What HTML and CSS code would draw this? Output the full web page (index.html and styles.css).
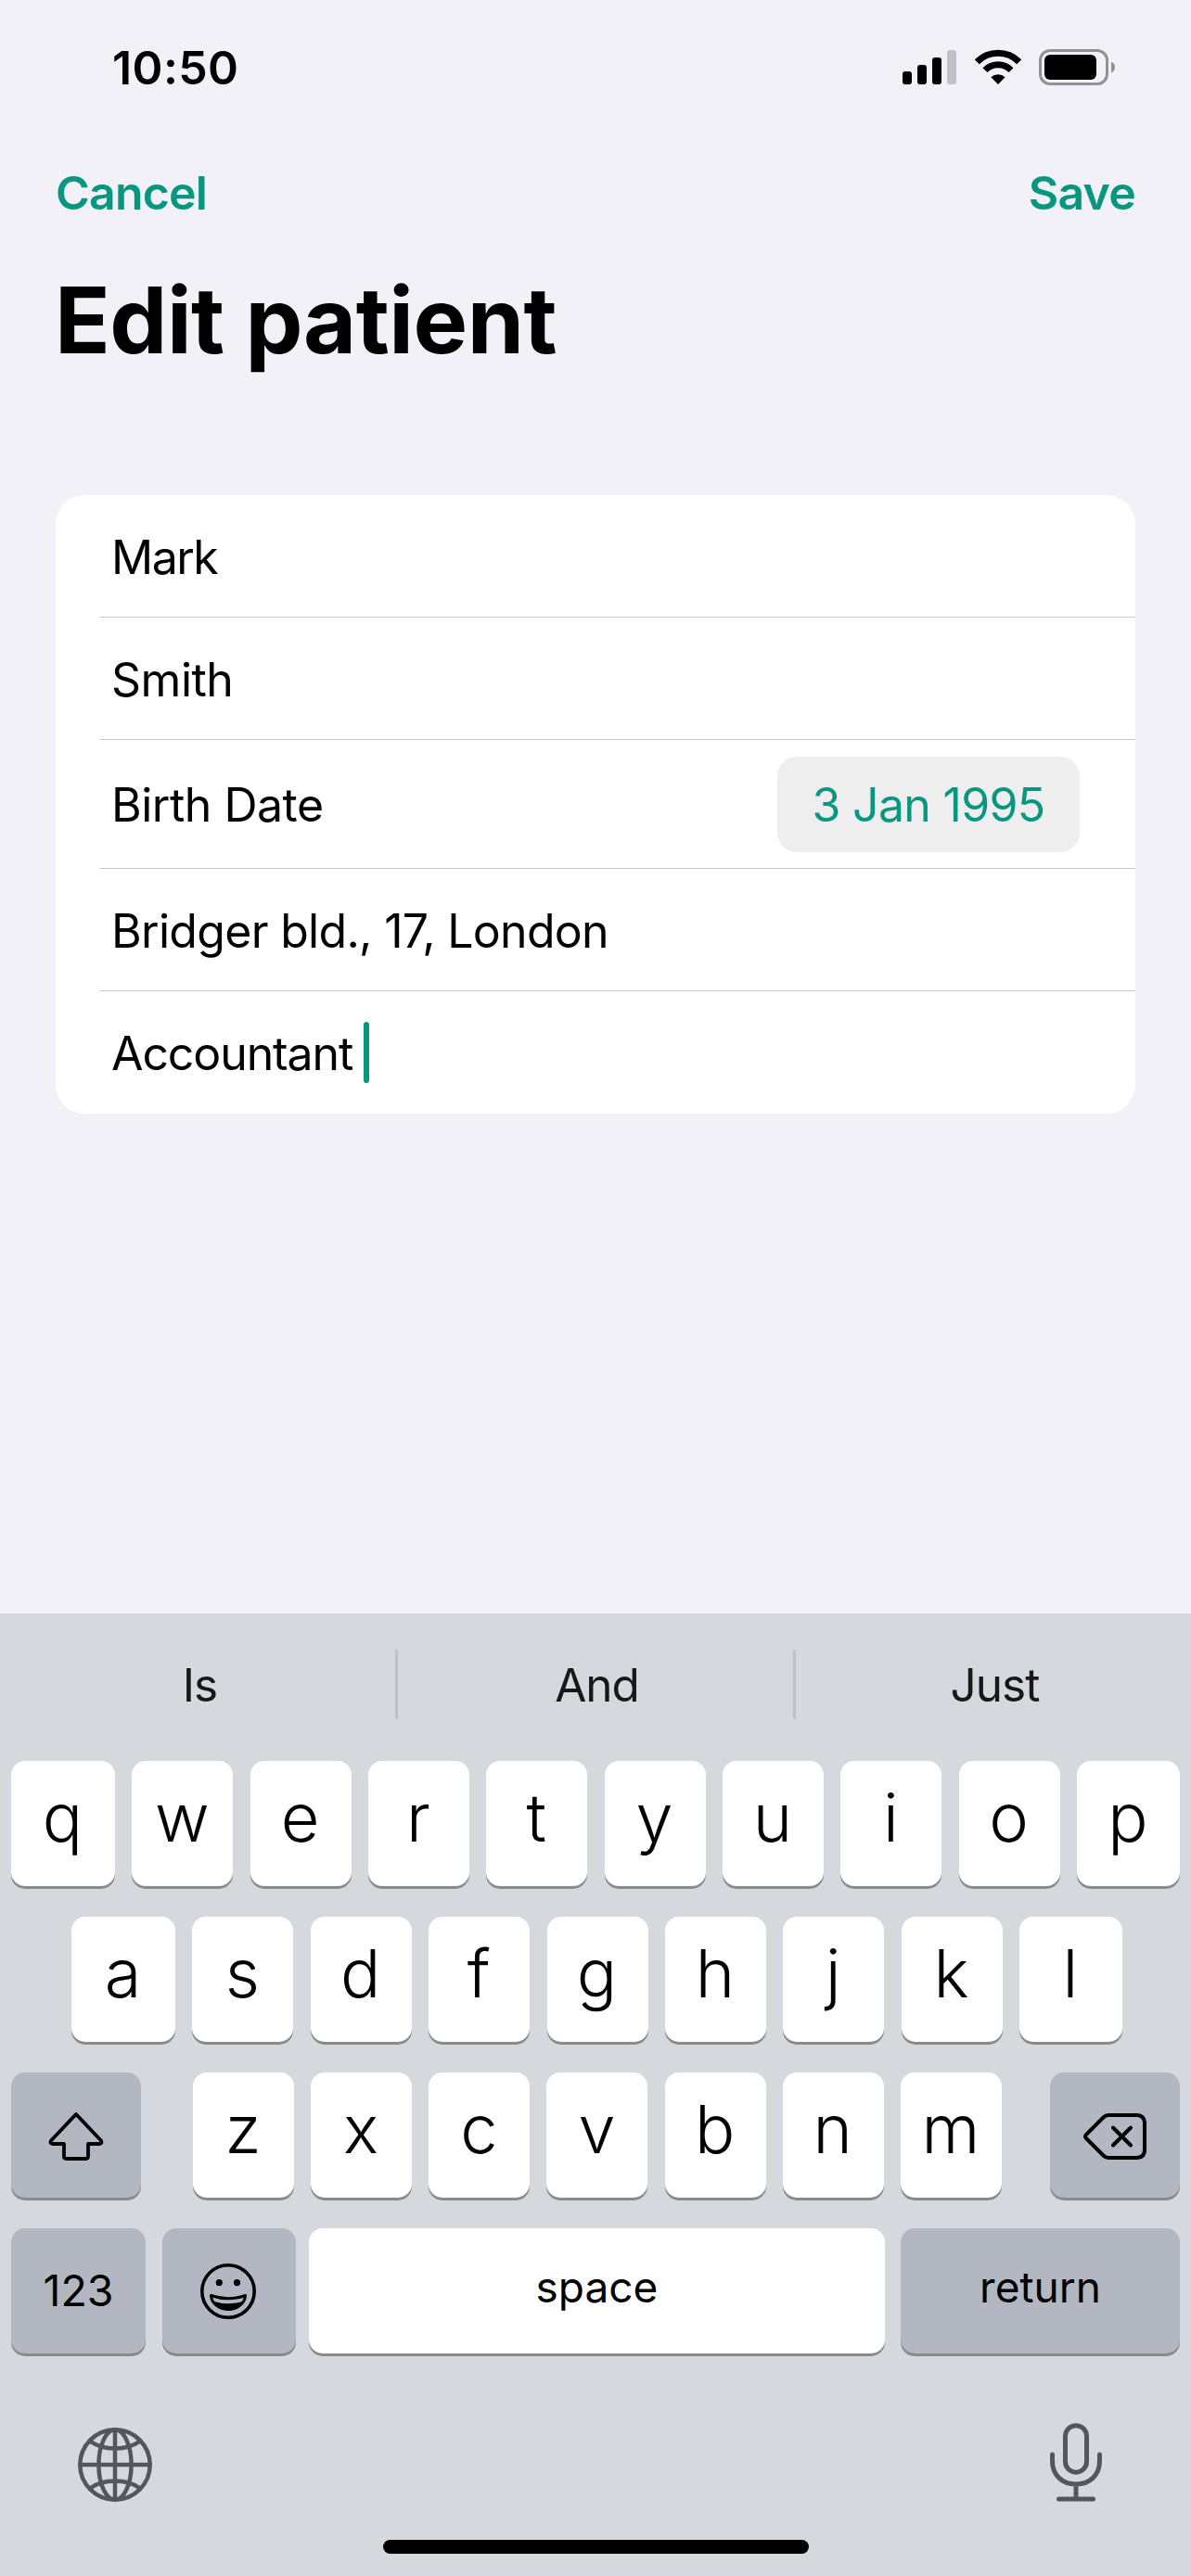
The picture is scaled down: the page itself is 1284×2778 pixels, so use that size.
FILE: index.html
```html
<!DOCTYPE html>
<html lang="en">
<head>
<meta charset="utf-8">
<title>Edit patient</title>
<link rel="stylesheet" href="styles.css">
</head>
<body>
<div class="screen">
  <header class="status">
    <span class="time">10:50</span>
    <div class="status-icons">
      <svg class="signal" width="58" height="40" viewBox="0 0 58 40">
        <rect x="0" y="24" width="10" height="14" rx="3"/>
        <rect x="16" y="17" width="10" height="21" rx="3"/>
        <rect x="32" y="9" width="10" height="29" rx="3"/>
        <rect class="dim" x="48" y="1" width="10" height="37" rx="3"/>
      </svg>
      <svg class="wifi" width="50" height="40" viewBox="0 0 50 40">
        <g fill="none" stroke="#000" stroke-width="7">
          <path d="M2.3 13.7A32.2 32.2 0 0 1 47.7 13.7"/>
          <path d="M11 22.6A19.8 19.8 0 0 1 39 22.6"/>
        </g>
        <path d="M17.4 30.2A11 11 0 0 1 32.6 30.2L25 38Z"/>
      </svg>
      <svg class="battery" width="82" height="40" viewBox="0 0 82 40">
        <rect x="1.5" y="1.5" width="72" height="36" rx="10.5" fill="none" stroke="#929296" stroke-width="3"/>
        <rect x="6" y="6" width="56" height="27" rx="6"/>
        <path d="M78 13.5Q82 15.5 82 19.5T78 25.5Z" fill="#929296"/>
      </svg>
    </div>
  </header>
  <nav class="nav">
    <a class="cancel">Cancel</a>
    <a class="save">Save</a>
  </nav>
  <h1 class="title">Edit patient</h1>
  <section class="card">
    <div class="row"><span class="name">Mark</span></div>
    <div class="row"><span>Smith</span></div>
    <div class="row tall"><span>Birth Date</span><span class="pill">3 Jan 1995</span></div>
    <div class="row"><span class="address">Bridger bld., 17, London</span></div>
    <div class="row last"><span class="job">Accountant</span><i class="caret"></i></div>
  </section>
  <section class="keyboard">
    <div class="suggestions">
      <span>Is</span><i></i><span>And</span><i></i><span>Just</span>
    </div>
    <div class="keys k1">
      <b>q</b><b>w</b><b>e</b><b>r</b><b>t</b><b>y</b><b>u</b><b>i</b><b>o</b><b>p</b>
    </div>
    <div class="keys k2">
      <b>a</b><b>s</b><b>d</b><b>f</b><b>g</b><b>h</b><b>j</b><b>k</b><b>l</b>
    </div>
    <div class="keys k3">
      <b class="dark"><svg width="60" height="54" viewBox="0 0 60 54"><path d="M30 3L57 31.5Q58.5 35 55 35H43V48.5Q43 51 40.5 51H19.5Q17 51 17 48.5V35H5Q1.5 35 3 31.5Z" fill="none" stroke="#000" stroke-width="3.8" stroke-linejoin="round"/></svg></b>
      <div class="letters"><b>z</b><b>x</b><b>c</b><b>v</b><b>b</b><b>n</b><b>m</b></div>
      <b class="dark"><svg width="68" height="50" viewBox="0 0 68 50"><g fill="none" stroke="#000" stroke-width="4" stroke-linecap="round" stroke-linejoin="round"><path d="M27 2H57Q66 2 66 11V39Q66 48 57 48H27Q24 48 21.5 45.5L3 27Q1 25 3 23L21.5 4.5Q24 2 27 2Z"/><path d="M32 15.5L51 34.5M51 15.5L32 34.5"/></g></svg></b>
    </div>
    <div class="keys k4">
      <b class="dark label num">123</b>
      <b class="dark emoji"><svg width="60" height="60" viewBox="0 0 60 60"><circle cx="30" cy="30" r="28.2" fill="none" stroke="#000" stroke-width="3.6"/><circle cx="20.3" cy="20.6" r="3.6"/><circle cx="39.5" cy="20.6" r="3.6"/><path d="M11.5 34.5Q30 41 48.5 34.5C48 43 40 49.5 30 49.5S12 43 11.5 34.5Z" fill="none" stroke="#000" stroke-width="3" stroke-linejoin="round"/><path d="M13 40.5Q30 46 47 40.5C44 47 38 50.5 30 50.5S16 47 13 40.5Z"/></svg></b>
      <b class="label">space</b>
      <b class="dark label">return</b>
    </div>
    <div class="dock">
      <svg width="80" height="80" viewBox="0 0 80 80"><g fill="none" stroke="#53565b" stroke-width="4.5"><circle cx="40" cy="40" r="37.7"/><ellipse cx="40" cy="40" rx="17.6" ry="37.7"/><path d="M40 2V78M2 40H78M13 14.5Q24 22.5 40 22.5T67 14.5M13 65.5Q24 57.5 40 57.5T67 65.5"/></g></svg>
      <svg width="56" height="85" viewBox="0 0 56 85"><g fill="none" stroke="#53565b" stroke-width="5" stroke-linecap="round"><rect x="16.5" y="2.7" width="23" height="50.5" rx="11.5"/><path d="M2.5 34V41C2.5 56 13 66 28 66S53.5 56 53.5 41V34M28 67V81M9.5 82H46.5"/></g></svg>
    </div>
    <div class="home"></div>
  </section>
</div>
</body>
</html>
```
FILE: styles.css
```css
* { box-sizing: border-box; }
body {
  margin: 0;
  font-family: Inter, "Liberation Sans", sans-serif;
  color: #000;
  background: #f2f1f7;
}
.screen {
  width: 1284px;
  height: 2778px;
  display: flex;
  flex-direction: column;
  overflow: hidden;
}
svg { display: block; }
.status {
  display: flex;
  justify-content: space-between;
  height: 141px;
  padding: 53px 82px 0 121px;
}
.time { font-size: 50px; line-height: 40px; font-weight: 600; letter-spacing: 0.4px; }
.status-icons { display: flex; }
.wifi { margin-left: 20px; }
.battery { margin-left: 19px; }
.dim { fill: #c1c0c5; }
.nav {
  display: flex;
  justify-content: space-between;
  height: 134px;
  padding: 37px 60px 0 60px;
  font-size: 50px;
  line-height: 60px;
  font-weight: 580;
  letter-spacing: -0.8px;
  color: #079780;
}
.title {
  margin: 0;
  height: 259px;
  padding: 11px 0 0 59px;
  font-size: 98.5px;
  line-height: 120px;
  font-weight: 700;
  letter-spacing: -0.5px;
}
.card {
  margin: 0 60px;
  background: #fff;
  border-radius: 31px;
  font-size: 50px;
  letter-spacing: -0.5px;
}
.row {
  display: flex;
  align-items: center;
  height: 132px;
  margin-left: 48px;
  padding: 2px 0 0 12px;
  border-bottom: 1px solid #c6c6c8;
}
.row.tall { height: 139px; padding-right: 60px; justify-content: space-between; }
.row.last { border: 0; }
.name { letter-spacing: -1.5px; }
.address { letter-spacing: -0.7px; }
.job { letter-spacing: -1.1px; }
.pill {
  width: 326px;
  height: 103px;
  margin-bottom: 2px;
  border-radius: 21px;
  background: #eee;
  color: #079780;
  line-height: 105px;
  letter-spacing: -0.7px;
  text-align: center;
}
.caret { width: 6px; height: 66px; margin: 0 0 2px 12px; border-radius: 3px; background: #079780; }
.keyboard {
  margin-top: auto;
  height: 1038px;
  padding: 0 12px;
  background: #d5d8dd;
  display: flex;
  flex-direction: column;
}
.suggestions {
  display: grid;
  grid-template-columns: 414px 3px 426px 3px 414px;
  height: 159px;
  padding-top: 39px;
  font-size: 49.5px;
  line-height: 77px;
  letter-spacing: -1px;
  text-align: center;
  color: #181818;
}
.suggestions i { height: 75px; background: #c0c0c5; }
.suggestions :first-child { padding-right: 7px; }
.suggestions :nth-child(3) { padding-left: 3px; }
.suggestions :last-child { padding-left: 15px; }
.keys {
  display: grid;
  justify-content: space-between;
  height: 135px;
  margin-bottom: 33px;
}
.keys b {
  display: flex;
  justify-content: center;
  align-items: center;
  height: 135px;
  padding: 0 1px 14px 0;
  border-radius: 15px;
  background: #fff;
  box-shadow: 0 3px 0 #898a8d;
  font-size: 72px;
  line-height: 90px;
  font-weight: 360;
}
.k1 { grid-template-columns: 112px repeat(8, 109px) 111px; }
.k2 { grid-template-columns: 112px repeat(7, 109px) 111px; margin-left: 65px; margin-right: 62px; }
.k3 { grid-template-columns: 140px 872px 140px; }
.k3 .letters { margin-left: 2px; margin-right: -2px; }
.letters { display: flex; justify-content: space-between; }
.letters b { width: 109px; }
.k4 { grid-template-columns: 145px 18px 144px 14px 621px 17px 301px; }
.k4 > :nth-child(2) { grid-column: 3; }
.k4 > :nth-child(3) { grid-column: 5; }
.k4 > :nth-child(4) { grid-column: 7; }
.keys .dark { padding: 3px 0 0; background: #b3b7c1; }
.keys .emoji { padding: 0 2px 0 0; }
.keys .label { font-size: 46px; font-weight: 400; padding: 0 0 10px; }
.keys .num { padding: 0 0 2px; font-size: 46.5px; }
.dock {
  display: flex;
  justify-content: space-between;
  align-items: flex-start;
  padding: 42px 84px 0 72px;
  height: 168px;
}
.dock svg:first-child { margin-top: 5px; }
.home { width: 459px; height: 15px; margin: 0 auto; border-radius: 8px; background: #000; }
```
